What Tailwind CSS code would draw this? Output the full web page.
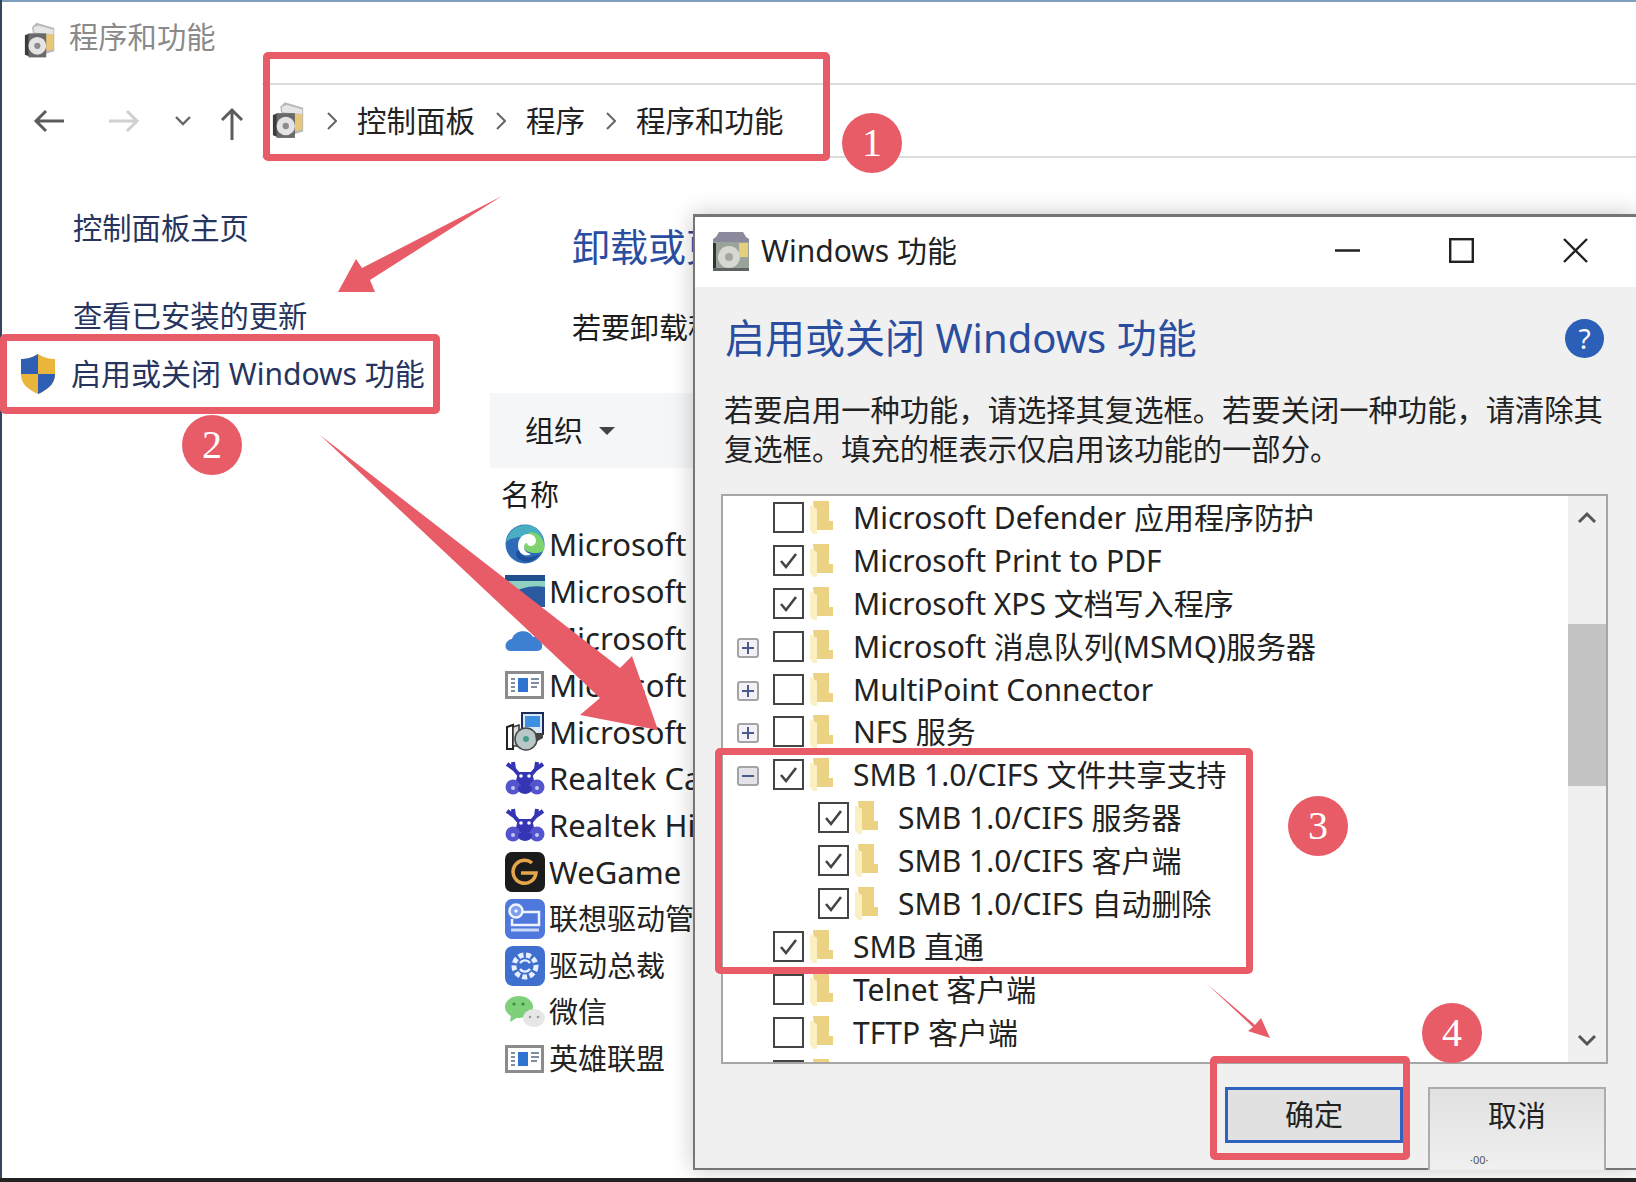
<!DOCTYPE html>
<html lang="zh-CN">
<head>
    <meta charset="UTF-8">
    <title>程序和功能</title>
    <script src="https://cdn.jsdelivr.net/npm/@tailwindcss/browser@4"></script>
</head>
<body class="bg-white">
    <!-- Shared icons -->
    <svg class="hidden">
        <symbol id="folder" viewBox="0 0 23 33">
            <path d="M3 0H19V20H23V29H6Z" fill="#ecd283"/>
            <path d="M0 4L7 8V33H3L0 29Z" fill="#fbf0c4"/>
        </symbol>
        <symbol id="tick" viewBox="0 0 27 27">
            <path d="M6 14L11 20L21 7" fill="none" stroke="#444" stroke-width="2.6"/>
        </symbol>
        <symbol id="progs" viewBox="0 0 36 40">
            <path d="M9 5L14 0L34 6V32L14 38Z" fill="#b9b9b9"/>
            <path d="M11 5L16 3L33 8V13L11 11Z" fill="#e6e6e6"/>
            <path d="M22 13H33V30L22 32Z" fill="#e8c878"/>
            <path d="M1 14L6 12V38L1 36Z" fill="#3c3c3c"/>
            <rect x="5" y="12" width="20" height="27" fill="#6a6a6a"/>
            <circle cx="15" cy="26" r="10" fill="#e4e4e4"/>
            <circle cx="15" cy="26" r="3.500" fill="#8c8c8c"/>
        </symbol>
        <symbol id="appwin" viewBox="0 0 40 30">
            <rect x="1.500" y="2.500" width="36" height="25" fill="#fff" stroke="#8b8b8b" stroke-width="3"/>
            <rect x="13" y="8" width="10" height="14" fill="#2f74d0"/>
            <path d="M6 9h4M6 13h4M6 17h4M6 21h4M26 9h8M26 13h8M26 17h6" stroke="#7f8f9f" stroke-width="2"/>
        </symbol>
        <symbol id="crab" viewBox="0 0 40 34">
            <g fill="none" stroke="#3434b4" stroke-width="4">
                <path d="M8 1L9 8L15 15M2 3L9 8M32 1L31 8L25 15M38 3L31 8"/>
            </g>
            <path d="M13 11H27L30 24H10Z" fill="#3434b4"/>
            <circle cx="8" cy="26" r="7.500" fill="#5454cc"/>
            <circle cx="32" cy="26" r="7.500" fill="#5454cc"/>
            <ellipse cx="20" cy="28" rx="7" ry="5" fill="#3434b4"/>
            <circle cx="16" cy="15" r="1.800" fill="#fff"/>
            <circle cx="24" cy="15" r="1.800" fill="#fff"/>
            <circle cx="8" cy="27" r="2" fill="#c4c4f0"/>
            <circle cx="32" cy="27" r="2" fill="#c4c4f0"/>
        </symbol>
    </svg>

    <div class="relative w-[1636px] h-[1182px] overflow-hidden bg-white text-[#1c1c1c] font-['Noto_Sans','Noto_Sans_CJK_SC',sans-serif]">
        <div class="flex flex-col h-full border-l-2 border-[#33465c]">
            <div class="h-[2px] bg-[#7fa0bd]"></div>

            <!-- Title bar -->
            <div class="h-[81px] flex items-center pl-[22px] shrink-0">
                <svg class="w-[32px] h-[37px] -mt-[4px]"><use href="#progs"/></svg>
                <span class="ml-[13px] text-[29.300px] leading-[40px] text-[#8a8a8a] -mt-[12px]">程序和功能</span>
            </div>

            <!-- Address row -->
            <div class="h-[75px] flex items-center shrink-0">
                <div class="w-[260px] flex items-center shrink-0 pl-[31px]">
                    <svg class="w-[32px] h-[24px]" viewBox="0 0 32 24"><path d="M31 12H3M13 2L3 12L13 22" fill="none" stroke="#5c5c5c" stroke-width="3"/></svg>
                    <svg class="ml-[43px] w-[32px] h-[24px]" viewBox="0 0 32 24"><path d="M1 12H29M19 2L29 12L19 22" fill="none" stroke="#d0d0d0" stroke-width="3"/></svg>
                    <svg class="ml-[35px] w-[16px] h-[10px]" viewBox="0 0 16 10"><path d="M1 1L8 8L15 1" fill="none" stroke="#666" stroke-width="2.400"/></svg>
                    <svg class="ml-[29px] w-[24px] h-[34px] mt-[6px]" viewBox="0 0 24 34"><path d="M12 33V3M2 13L12 3L22 13" fill="none" stroke="#5c5c5c" stroke-width="3"/></svg>
                </div>
                <div class="flex-1 h-full flex items-center border-y-2 border-[#dcdcdc] pl-[10px] text-[29.500px] leading-[40px] text-[#222]">
                    <svg class="w-[33px] h-[37px]"><use href="#progs"/></svg>
                    <svg class="ml-[22px] w-[10px] h-[18px]" viewBox="0 0 10 18"><path d="M1 1L9 9L1 17" fill="none" stroke="#666" stroke-width="2"/></svg>
                    <span class="ml-[20px]">控制面板</span>
                    <svg class="ml-[21px] w-[10px] h-[18px]" viewBox="0 0 10 18"><path d="M1 1L9 9L1 17" fill="none" stroke="#666" stroke-width="2"/></svg>
                    <span class="ml-[20px]">程序</span>
                    <svg class="ml-[21px] w-[10px] h-[18px]" viewBox="0 0 10 18"><path d="M1 1L9 9L1 17" fill="none" stroke="#666" stroke-width="2"/></svg>
                    <span class="ml-[20px]">程序和功能</span>
                </div>
            </div>

            <!-- Body -->
            <div class="flex-1 flex min-h-0 text-[29px] leading-[40px]">
                <div class="w-[488px] shrink-0 pt-[50px] pl-[71px] text-[#26345e]">
                    <div class="text-[29.300px]">控制面板主页</div>
                    <div class="mt-[48px] text-[29.300px]">查看已安装的更新</div>
                    <div class="mt-[17px] flex items-center -ml-[54px] whitespace-nowrap text-[30px]">
                        <svg class="w-[38px] h-[42px] shrink-0" viewBox="0 0 38 42">
                            <path d="M19 1C25 5 31 6 36 6V22C36 31 28 37 19 41C10 37 2 31 2 22V6C7 6 13 5 19 1Z" fill="#e9b53b"/>
                            <path d="M19 1C13 5 7 6 2 6V21H19Z" fill="#2f5fb4"/>
                            <path d="M19 21H36C36 31 28 37 19 41Z" fill="#2f5fb4"/>
                        </svg>
                        <span class="ml-[14px]">启用或关闭 Windows 功能</span>
                    </div>
                </div>
                <!-- Part of this column lies behind the dialog -->
                <div class="w-[204px] shrink-0 overflow-hidden pt-[63px]">
                    <div class="ml-[82px] w-[122px] overflow-hidden text-[38px] leading-[50px] text-[#2a4da0] whitespace-nowrap">卸载或更</div>
                    <div class="ml-[82px] w-[122px] overflow-hidden mt-[37px] whitespace-nowrap">若要卸载程</div>
                    <div class="mt-[45px] h-[75px] bg-[#f5f6f7] flex items-center pl-[35px]">
                        <span>组织</span>
                        <svg class="ml-[16px] w-[16px] h-[8px]" viewBox="0 0 16 8"><path d="M0 0H16L8 8Z" fill="#444"/></svg>
                    </div>
                    <div class="pl-[11px] mt-[7px]">名称</div>
                    <div class="mt-[6px] pl-[15px] text-[31px] text-[#222] whitespace-nowrap">
                        <div class="h-[46.800px] flex items-center gap-[4px]">
                            <svg class="w-[40px] h-[40px] shrink-0" viewBox="0 0 40 40">
                                <circle cx="20" cy="20" r="19.500" fill="#2f6cb8"/>
                                <path d="M1 18C3 7 12 1 21 1C32 1 39 10 39.500 22C36 17 30 13 22 13C12 13 5 14 1 18Z" fill="#4aaec2"/>
                                <path d="M26 8C35 9 39 16 39.500 24C39.500 27 36 29 30 29C24 29 20 27 18 22C19 14 22 9 26 8Z" fill="#7ed36f"/>
                                <path d="M13 24C13 16 18 12 23 12C28 12 31 15 31 19C31 22 28 24 26 24C23 24 22 22 22 21C18 21 17 30 26 32C22 35 13 33 13 24Z" fill="#fff" transform="translate(0 -2)"/>
                                <path d="M14 26C15 33 24 36 34 30C31 37 22 40 15 36C10 33 10 27 14 26Z" fill="#1f4f9a"/>
                            </svg>
                            <span>Microsoft</span>
                        </div>
                        <div class="h-[46.800px] flex items-center gap-[4px]">
                            <svg class="w-[40px] h-[32px] shrink-0" viewBox="0 0 40 32">
                                <rect width="40" height="6" fill="#1f4f8c"/>
                                <rect y="6" width="40" height="26" fill="#8fd0c0"/>
                                <path d="M0 24C12 12 28 10 40 12V32H0Z" fill="#2c5aa0"/>
                            </svg>
                            <span>Microsoft</span>
                        </div>
                        <div class="h-[46.800px] flex items-center gap-[4px]">
                            <svg class="w-[40px] h-[30px] shrink-0" viewBox="0 0 40 30"><path d="M6 28C-2 28 -1 17 7 16C10 6 24 6 28 14C36 12 42 28 32 28Z" fill="#3d7fd0"/></svg>
                            <span>Microsoft</span>
                        </div>
                        <div class="h-[46.800px] flex items-center gap-[4px]">
                            <svg class="w-[40px] h-[30px] shrink-0"><use href="#appwin"/></svg>
                            <span>Microsoft</span>
                        </div>
                        <div class="h-[46.800px] flex items-center gap-[4px]">
                            <svg class="w-[40px] h-[40px] shrink-0" viewBox="0 0 40 40">
                                <path d="M2 15L8 13V37H2Z" fill="#fff" stroke="#222" stroke-width="2"/>
                                <path d="M8 15L14 13V34H8Z" fill="#ddd" stroke="#333" stroke-width="1.500"/>
                                <rect x="17" y="1" width="21" height="21" fill="#dce8f5" stroke="#1c2c5a" stroke-width="2"/>
                                <rect x="20" y="4" width="15" height="11" fill="#3d8fe0"/>
                                <circle cx="21" cy="27" r="11" fill="#b8c8c8" stroke="#444" stroke-width="1.500"/>
                                <circle cx="21" cy="27" r="3" fill="#3f9f8a"/>
                                <path d="M30 21H38V26L31 30Z" fill="#444"/>
                            </svg>
                            <span>Microsoft</span>
                        </div>
                        <div class="h-[46.800px] flex items-center gap-[4px]">
                            <svg class="w-[40px] h-[34px] shrink-0"><use href="#crab"/></svg>
                            <span>Realtek Ca</span>
                        </div>
                        <div class="h-[46.800px] flex items-center gap-[4px]">
                            <svg class="w-[40px] h-[34px] shrink-0"><use href="#crab"/></svg>
                            <span>Realtek Hi</span>
                        </div>
                        <div class="h-[46.800px] flex items-center gap-[4px]">
                            <svg class="w-[40px] h-[40px] shrink-0" viewBox="0 0 40 40">
                                <rect width="40" height="40" rx="7" fill="#1b1b1b"/>
                                <path d="M27 11A11.500 11.500 0 1 0 31 21H16" fill="none" stroke="#e5a54a" stroke-width="3.500"/>
                            </svg>
                            <span>WeGame</span>
                        </div>
                        <div class="h-[46.800px] flex items-center gap-[4px] text-[29px]">
                            <svg class="w-[40px] h-[40px] shrink-0" viewBox="0 0 40 40">
                                <rect width="40" height="40" rx="7" fill="#4f78dc"/>
                                <circle cx="11" cy="12" r="6.500" fill="#7ea0ea" stroke="#eef3ff" stroke-width="2.500"/>
                                <circle cx="11" cy="12" r="1.800" fill="#eef3ff"/>
                                <path d="M18 13H34V26H7V20" fill="none" stroke="#eef3ff" stroke-width="2.500"/>
                                <path d="M6 31H34" stroke="#c8d8fa" stroke-width="3"/>
                            </svg>
                            <span>联想驱动管</span>
                        </div>
                        <div class="h-[46.800px] flex items-center gap-[4px] text-[29px]">
                            <svg class="w-[40px] h-[40px] shrink-0" viewBox="0 0 40 40">
                                <rect width="40" height="40" rx="8" fill="#3f70d0"/>
                                <circle cx="20" cy="20" r="11" fill="none" stroke="#e8f0ff" stroke-width="5" stroke-dasharray="5 2.500"/>
                                <path d="M15 17C18 13 23 14 25 17M25 23C22 27 17 26 15 23" fill="none" stroke="#e8f0ff" stroke-width="2.400"/>
                            </svg>
                            <span>驱动总裁</span>
                        </div>
                        <div class="h-[46.800px] flex items-center gap-[4px] text-[29px]">
                            <svg class="w-[40px] h-[34px] shrink-0" viewBox="0 0 40 34">
                                <ellipse cx="14" cy="12" rx="14" ry="11" fill="#7ed07a"/>
                                <path d="M6 20L5 27L13 22Z" fill="#7ed07a"/>
                                <ellipse cx="29" cy="23" rx="11" ry="9" fill="#e6e6e6"/>
                                <circle cx="9" cy="9" r="1.600" fill="#3d8a3a"/><circle cx="18" cy="9" r="1.600" fill="#3d8a3a"/>
                                <circle cx="25" cy="22" r="1.300" fill="#999"/><circle cx="33" cy="22" r="1.300" fill="#999"/>
                            </svg>
                            <span>微信</span>
                        </div>
                        <div class="h-[46.800px] flex items-center gap-[4px] text-[29px]">
                            <svg class="w-[40px] h-[30px] shrink-0"><use href="#appwin"/></svg>
                            <span>英雄联盟</span>
                        </div>
                    </div>
                </div>
            </div>
            <div class="h-[4px] bg-[#222] -ml-[2px] shrink-0"></div>
        </div>

        <!-- Windows features dialog -->
        <div class="absolute left-[693px] top-[214px] w-[943px] h-[956px] flex flex-col bg-[#f0f0f0] border-l-2 border-t-[3px] border-b-2 border-[#767676] shadow-[0_0_22px_rgba(0,0,0,0.22)]">
            <div class="h-[70px] bg-white flex items-center pl-[17px] shrink-0 text-[30px] leading-[40px] text-[#222]">
                <svg class="w-[38px] h-[40px]" viewBox="0 0 38 40">
                    <path d="M7 0H31L34 5L37 7V38H1V7L4 5Z" fill="#8a8a9c"/>
                    <rect x="1" y="10" width="36" height="29" fill="#9aa39a"/>
                    <circle cx="17" cy="25" r="11" fill="#d8d8d2"/>
                    <circle cx="17" cy="25" r="4" fill="#a6a69f"/>
                    <rect x="27" y="11" width="9" height="14" fill="#e3cf7e"/>
                    <rect x="1" y="11" width="3" height="28" fill="#333"/>
                    <rect x="1" y="36" width="36" height="3" fill="#5d635f"/>
                </svg>
                <span class="ml-[11px] -mt-[2px]">Windows 功能</span>
                <div class="ml-auto flex items-center pr-[48px] -mt-[4px]">
                    <svg class="w-[25px] h-[3px]" viewBox="0 0 25 3"><path d="M0 1.500H25" stroke="#222" stroke-width="2.500"/></svg>
                    <svg class="ml-[89px] w-[25px] h-[25px]" viewBox="0 0 25 25"><rect x="1.200" y="1.200" width="22.600" height="22.600" fill="none" stroke="#222" stroke-width="2.400"/></svg>
                    <svg class="ml-[89px] w-[25px] h-[25px]" viewBox="0 0 25 25"><path d="M1 1L24 24M24 1L1 24" stroke="#222" stroke-width="2.400"/></svg>
                </div>
            </div>
            <div class="flex items-center justify-between pl-[30px] pr-[32px] mt-[26px] h-[50px] shrink-0">
                <h1 class="text-[40px] leading-[50px] text-[#2a4da0] whitespace-nowrap">启用或关闭 Windows 功能</h1>
                <div class="w-[39px] h-[39px] rounded-full bg-[#2c5fb8] text-white text-[28px] leading-[39px] text-center">?</div>
            </div>
            <p class="mt-[28px] pl-[29px] text-[29.300px] leading-[39px] text-[#222] whitespace-nowrap shrink-0">若要启用一种功能，请选择其复选框。若要关闭一种功能，请清除其<br>复选框。填充的框表示仅启用该功能的一部分。</p>

            <!-- Feature tree -->
            <div class="relative ml-[26px] mt-[25px] w-[887px] h-[570px] shrink-0 bg-white border-2 border-[#a6a6a6] overflow-hidden text-[30px] text-[#222] whitespace-nowrap">
                <div class="pr-[38px]">
                    <div class="h-[42.900px] flex items-center pl-[50px]">
                        <div class="w-[31px] h-[31px] shrink-0 border-2 border-[#444] bg-white"></div>
                        <svg class="ml-[6px] w-[23px] h-[33px] shrink-0"><use href="#folder"/></svg>
                        <span class="ml-[20px]">Microsoft Defender 应用程序防护</span>
                    </div>
                    <div class="h-[42.900px] flex items-center pl-[50px]">
                        <div class="w-[31px] h-[31px] shrink-0 border-2 border-[#444] bg-white"><svg class="w-full h-full"><use href="#tick"/></svg></div>
                        <svg class="ml-[6px] w-[23px] h-[33px] shrink-0"><use href="#folder"/></svg>
                        <span class="ml-[20px]">Microsoft Print to PDF</span>
                    </div>
                    <div class="h-[42.900px] flex items-center pl-[50px]">
                        <div class="w-[31px] h-[31px] shrink-0 border-2 border-[#444] bg-white"><svg class="w-full h-full"><use href="#tick"/></svg></div>
                        <svg class="ml-[6px] w-[23px] h-[33px] shrink-0"><use href="#folder"/></svg>
                        <span class="ml-[20px]">Microsoft XPS 文档写入程序</span>
                    </div>
                    <div class="h-[42.900px] flex items-center pl-[14px]">
                        <svg class="w-[22px] h-[20px] mr-[14px] mt-[3px] shrink-0" viewBox="0 0 22 20"><rect x="1" y="1" width="20" height="18" rx="2" fill="#f2f2f6" stroke="#a4a4a4" stroke-width="2"/><path d="M5 10H17M11 4V16" stroke="#4a5a90" stroke-width="2"/></svg>
                        <div class="w-[31px] h-[31px] shrink-0 border-2 border-[#444] bg-white"></div>
                        <svg class="ml-[6px] w-[23px] h-[33px] shrink-0"><use href="#folder"/></svg>
                        <span class="ml-[20px]">Microsoft 消息队列(MSMQ)服务器</span>
                    </div>
                    <div class="h-[42.900px] flex items-center pl-[14px]">
                        <svg class="w-[22px] h-[20px] mr-[14px] mt-[3px] shrink-0" viewBox="0 0 22 20"><rect x="1" y="1" width="20" height="18" rx="2" fill="#f2f2f6" stroke="#a4a4a4" stroke-width="2"/><path d="M5 10H17M11 4V16" stroke="#4a5a90" stroke-width="2"/></svg>
                        <div class="w-[31px] h-[31px] shrink-0 border-2 border-[#444] bg-white"></div>
                        <svg class="ml-[6px] w-[23px] h-[33px] shrink-0"><use href="#folder"/></svg>
                        <span class="ml-[20px]">MultiPoint Connector</span>
                    </div>
                    <div class="h-[42.900px] flex items-center pl-[14px]">
                        <svg class="w-[22px] h-[20px] mr-[14px] mt-[3px] shrink-0" viewBox="0 0 22 20"><rect x="1" y="1" width="20" height="18" rx="2" fill="#f2f2f6" stroke="#a4a4a4" stroke-width="2"/><path d="M5 10H17M11 4V16" stroke="#4a5a90" stroke-width="2"/></svg>
                        <div class="w-[31px] h-[31px] shrink-0 border-2 border-[#444] bg-white"></div>
                        <svg class="ml-[6px] w-[23px] h-[33px] shrink-0"><use href="#folder"/></svg>
                        <span class="ml-[20px]">NFS 服务</span>
                    </div>
                    <div class="h-[42.900px] flex items-center pl-[14px]">
                        <svg class="w-[22px] h-[20px] mr-[14px] mt-[3px] shrink-0" viewBox="0 0 22 20"><rect x="1" y="1" width="20" height="18" rx="2" fill="#e4e4e8" stroke="#a4a4a4" stroke-width="2"/><path d="M5 10H17" stroke="#4a5a90" stroke-width="2"/></svg>
                        <div class="w-[31px] h-[31px] shrink-0 border-2 border-[#444] bg-white"><svg class="w-full h-full"><use href="#tick"/></svg></div>
                        <svg class="ml-[6px] w-[23px] h-[33px] shrink-0"><use href="#folder"/></svg>
                        <span class="ml-[20px]">SMB 1.0/CIFS 文件共享支持</span>
                    </div>
                    <div class="h-[42.900px] flex items-center pl-[95px]">
                        <div class="w-[31px] h-[31px] shrink-0 border-2 border-[#444] bg-white"><svg class="w-full h-full"><use href="#tick"/></svg></div>
                        <svg class="ml-[6px] w-[23px] h-[33px] shrink-0"><use href="#folder"/></svg>
                        <span class="ml-[20px]">SMB 1.0/CIFS 服务器</span>
                    </div>
                    <div class="h-[42.900px] flex items-center pl-[95px]">
                        <div class="w-[31px] h-[31px] shrink-0 border-2 border-[#444] bg-white"><svg class="w-full h-full"><use href="#tick"/></svg></div>
                        <svg class="ml-[6px] w-[23px] h-[33px] shrink-0"><use href="#folder"/></svg>
                        <span class="ml-[20px]">SMB 1.0/CIFS 客户端</span>
                    </div>
                    <div class="h-[42.900px] flex items-center pl-[95px]">
                        <div class="w-[31px] h-[31px] shrink-0 border-2 border-[#444] bg-white"><svg class="w-full h-full"><use href="#tick"/></svg></div>
                        <svg class="ml-[6px] w-[23px] h-[33px] shrink-0"><use href="#folder"/></svg>
                        <span class="ml-[20px]">SMB 1.0/CIFS 自动删除</span>
                    </div>
                    <div class="h-[42.900px] flex items-center pl-[50px]">
                        <div class="w-[31px] h-[31px] shrink-0 border-2 border-[#444] bg-white"><svg class="w-full h-full"><use href="#tick"/></svg></div>
                        <svg class="ml-[6px] w-[23px] h-[33px] shrink-0"><use href="#folder"/></svg>
                        <span class="ml-[20px]">SMB 直通</span>
                    </div>
                    <div class="h-[42.900px] flex items-center pl-[50px]">
                        <div class="w-[31px] h-[31px] shrink-0 border-2 border-[#444] bg-white"></div>
                        <svg class="ml-[6px] w-[23px] h-[33px] shrink-0"><use href="#folder"/></svg>
                        <span class="ml-[20px]">Telnet 客户端</span>
                    </div>
                    <div class="h-[42.900px] flex items-center pl-[50px]">
                        <div class="w-[31px] h-[31px] shrink-0 border-2 border-[#444] bg-white"></div>
                        <svg class="ml-[6px] w-[23px] h-[33px] shrink-0"><use href="#folder"/></svg>
                        <span class="ml-[20px]">TFTP 客户端</span>
                    </div>
                    <div class="h-[42.900px] flex items-center pl-[50px]">
                        <div class="w-[31px] h-[31px] shrink-0 border-2 border-[#444] bg-white"></div>
                        <svg class="ml-[6px] w-[23px] h-[33px] shrink-0"><use href="#folder"/></svg>
                    </div>
                </div>
                <!-- Scrollbar -->
                <div class="absolute right-0 top-0 bottom-0 w-[38px] bg-[#f0f0f0] flex flex-col items-center justify-between py-[15px]">
                    <svg class="w-[20px] h-[13px]" viewBox="0 0 20 13"><path d="M2 11L10 3L18 11" fill="none" stroke="#555" stroke-width="3"/></svg>
                    <svg class="w-[20px] h-[13px]" viewBox="0 0 20 13"><path d="M2 2L10 10L18 2" fill="none" stroke="#555" stroke-width="3"/></svg>
                    <div class="absolute left-0 right-0 top-[128px] h-[162px] bg-[#c4c4c4]"></div>
                </div>
            </div>

            <!-- Buttons -->
            <div class="flex justify-end items-start gap-[25px] pr-[30px] mt-[23px] flex-1 text-[29px] text-[#222]">
                <button class="w-[178px] h-[56px] bg-[#e1e1e1] border-[3px] border-[#2f62c0] leading-[48px]">确定</button>
                <button class="relative w-[178px] h-[83px] bg-gradient-to-b from-[#e1e1e1] to-[#f0f0f0] border-2 border-b-0 border-[#adadad] pb-[28px] leading-[48px]">取消<span class="absolute left-[40px] bottom-[3px] text-[11px] leading-[14px] text-[#555]">·00·</span></button>
            </div>
        </div>

        <!-- Annotations -->
        <svg class="absolute left-0 top-0 w-[1636px] h-[1182px]" viewBox="0 0 1636 1182">
            <path d="M502 196L362 268L356 259L338 292H375L370 280Z" fill="#e85c68"/>
            <path d="M320 435L620 668L632 656L658 730L580 715L600 698Z" fill="#e85c68"/>
            <path d="M1206 983L1255 1025L1261 1018L1270 1038L1248 1031L1253 1027Z" fill="#e85c68"/>
        </svg>
        <div class="absolute left-[263px] top-[52px] w-[567px] h-[109px] border-[7px] border-[#e85c68] rounded-[5px]"></div>
        <div class="absolute left-0 top-[334px] w-[440px] h-[80px] border-[7px] border-[#e85c68] rounded-[5px]"></div>
        <div class="absolute left-[715px] top-[748px] w-[538px] h-[226px] border-[7px] border-[#e85c68] rounded-[5px]"></div>
        <div class="absolute left-[1210px] top-[1056px] w-[200px] h-[104px] border-[7px] border-[#e85c68] rounded-[5px]"></div>

        <div class="absolute left-[842px] top-[113px] w-[60px] h-[60px] rounded-full bg-[#e85c68] text-white text-center text-[40px] leading-[60px] font-['Liberation_Serif',serif]">1</div>
        <div class="absolute left-[182px] top-[415px] w-[60px] h-[60px] rounded-full bg-[#e85c68] text-white text-center text-[40px] leading-[60px] font-['Liberation_Serif',serif]">2</div>
        <div class="absolute left-[1288px] top-[796px] w-[60px] h-[60px] rounded-full bg-[#e85c68] text-white text-center text-[40px] leading-[60px] font-['Liberation_Serif',serif]">3</div>
        <div class="absolute left-[1422px] top-[1003px] w-[60px] h-[60px] rounded-full bg-[#e85c68] text-white text-center text-[40px] leading-[60px] font-['Liberation_Serif',serif]">4</div>
    </div>
</body>
</html>
